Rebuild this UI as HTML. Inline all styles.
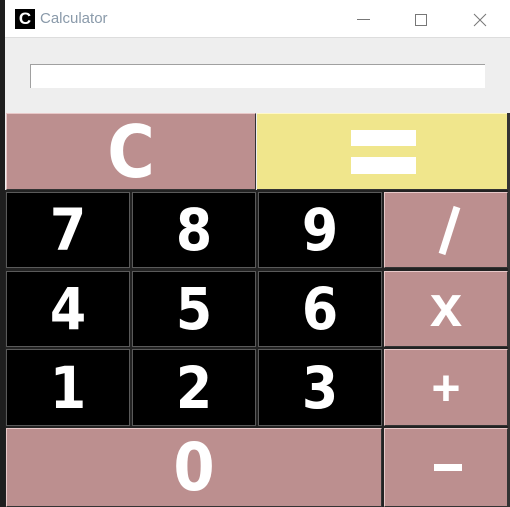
<!DOCTYPE html>
<html><head><style>
*{margin:0;padding:0;box-sizing:border-box}
body{width:510px;height:507px;background:#1e1e1e;position:relative;overflow:hidden;font-family:"Liberation Sans",sans-serif}
.a{position:absolute}
.b{position:absolute;display:flex;align-items:center;justify-content:center;color:#fff;font-weight:bold;line-height:1}
.k{background:#000;border:1px solid #5a5a5a;font-size:58px;font-family:"DejaVu Sans Condensed","DejaVu Sans",sans-serif}
.p{background:#bc8f8f;border-top:1px solid #e8c8c8;border-left:1px solid #e8c8c8;border-right:1px solid #333;border-bottom:1px solid #333}
</style></head><body>
<div class="a" style="left:5px;top:0;width:505px;height:507px;background:#eeeeee"></div>
<div class="a" style="left:5px;top:0;width:505px;height:38px;background:#fff;border-bottom:1px solid #ddd"></div>
<div class="a" style="left:15px;top:9px;width:20px;height:20px;background:#000;color:#fff;font-weight:bold;font-size:17px;text-align:center;line-height:20px">C</div>
<div class="a" style="left:40px;top:10px;font-size:15px;color:#8a9aaa">Calculator</div>
<div class="a" style="left:357px;top:19px;width:13px;height:1px;background:#777"></div>
<div class="a" style="left:415px;top:14px;width:12px;height:12px;border:1px solid #777"></div>
<svg class="a" style="left:473px;top:13px" width="14" height="14"><path d="M1 1L13 13M13 1L1 13" stroke="#777" stroke-width="1"/></svg>
<div class="a" style="left:30px;top:64px;width:455px;height:24px;background:#fff;border-top:1px solid #a0a0a0;border-left:1px solid #a0a0a0"></div>
<div class="a" style="left:507px;top:113px;width:3px;height:394px;background:#333"></div>
<div class="b p" style="left:6px;top:113px;width:250px;height:77px;font-size:72px;font-family:'DejaVu Sans Condensed','DejaVu Sans',sans-serif">C</div>
<div class="b" style="left:257px;top:113px;width:250px;height:77px;background:#f0e68c;border-top:1px solid #fff8c8;border-bottom:1px solid #333"></div>
<div class="a" style="left:351px;top:130px;width:65px;height:16px;background:#fff"></div>
<div class="a" style="left:351px;top:157px;width:65px;height:17px;background:#fff"></div>
<div class="a" style="left:5px;top:190px;width:503px;height:317px;background:#222"></div>
<div class="b k" style="left:6px;top:192px;width:124px;height:76px">7</div>
<div class="b k" style="left:132px;top:192px;width:124px;height:76px">8</div>
<div class="b k" style="left:258px;top:192px;width:124px;height:76px">9</div>
<div class="b p" style="left:384px;top:192px;width:124px;height:76px"></div>
<svg class="a" style="left:430px;top:200px" width="35" height="60"><path d="M27 7L12 54" stroke="#fff" stroke-width="7"/></svg>
<div class="b k" style="left:6px;top:271px;width:124px;height:76px">4</div>
<div class="b k" style="left:132px;top:271px;width:124px;height:76px">5</div>
<div class="b k" style="left:258px;top:271px;width:124px;height:76px">6</div>
<div class="b p" style="left:384px;top:271px;width:124px;height:76px;font-size:58px;padding-bottom:4px">x</div>
<div class="b k" style="left:6px;top:349px;width:124px;height:77px">1</div>
<div class="b k" style="left:132px;top:349px;width:124px;height:77px">2</div>
<div class="b k" style="left:258px;top:349px;width:124px;height:77px">3</div>
<div class="b p" style="left:384px;top:349px;width:124px;height:77px;font-size:50px">+</div>
<div class="b p" style="left:6px;top:428px;width:376px;height:79px;font-size:66px;font-family:'DejaVu Sans Condensed','DejaVu Sans',sans-serif">0</div>
<div class="b p" style="left:384px;top:428px;width:124px;height:79px"></div>
<div class="a" style="left:434px;top:464px;width:28px;height:7px;background:#fff"></div>
</body></html>
